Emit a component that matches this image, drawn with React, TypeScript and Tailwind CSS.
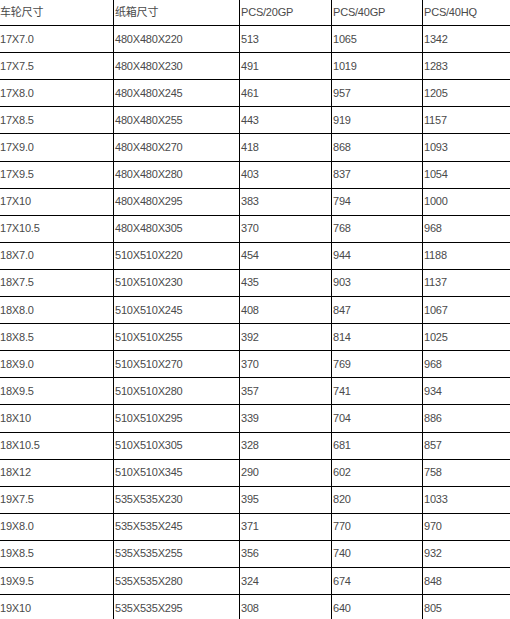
const header = ["车轮尺寸", "纸箱尺寸", "PCS/20GP", "PCS/40GP", "PCS/40HQ"];

const rows: string[][] = [
  ["17X7.0", "480X480X220", "513", "1065", "1342"],
  ["17X7.5", "480X480X230", "491", "1019", "1283"],
  ["17X8.0", "480X480X245", "461", "957", "1205"],
  ["17X8.5", "480X480X255", "443", "919", "1157"],
  ["17X9.0", "480X480X270", "418", "868", "1093"],
  ["17X9.5", "480X480X280", "403", "837", "1054"],
  ["17X10", "480X480X295", "383", "794", "1000"],
  ["17X10.5", "480X480X305", "370", "768", "968"],
  ["18X7.0", "510X510X220", "454", "944", "1188"],
  ["18X7.5", "510X510X230", "435", "903", "1137"],
  ["18X8.0", "510X510X245", "408", "847", "1067"],
  ["18X8.5", "510X510X255", "392", "814", "1025"],
  ["18X9.0", "510X510X270", "370", "769", "968"],
  ["18X9.5", "510X510X280", "357", "741", "934"],
  ["18X10", "510X510X295", "339", "704", "886"],
  ["18X10.5", "510X510X305", "328", "681", "857"],
  ["18X12", "510X510X345", "290", "602", "758"],
  ["19X7.5", "535X535X230", "395", "820", "1033"],
  ["19X8.0", "535X535X245", "371", "770", "970"],
  ["19X8.5", "535X535X255", "356", "740", "932"],
  ["19X9.5", "535X535X280", "324", "674", "848"],
  ["19X10", "535X535X295", "308", "640", "805"],
];

function Row({ cells }: { cells: string[] }) {
  return (
    <tr>
      {cells.map((c, i) => (
        <td
          key={i}
          className="h-[27.1px] border border-black px-[1px] py-0 align-middle leading-none whitespace-nowrap"
        >
          {c}
        </td>
      ))}
    </tr>
  );
}

export default function App() {
  return (
    <div className="w-[510px] h-[619px] overflow-hidden bg-white">
      <table
        className="table-fixed border-collapse w-[516px] -ml-[2px] -mt-[2px] text-[11px] text-[#4a4a4a] tracking-[-0.2px]"
        style={{ fontFamily: '"Liberation Sans", Arial, "Noto Sans CJK SC", sans-serif' }}
      >
        <colgroup>
          <col className="w-[115px]" />
          <col className="w-[126px]" />
          <col className="w-[92px]" />
          <col className="w-[91px]" />
          <col className="w-[92px]" />
        </colgroup>
        <tbody>
          <Row cells={header} />
          {rows.map((r) => (
            <Row key={r[0]} cells={r} />
          ))}
        </tbody>
      </table>
    </div>
  );
}
